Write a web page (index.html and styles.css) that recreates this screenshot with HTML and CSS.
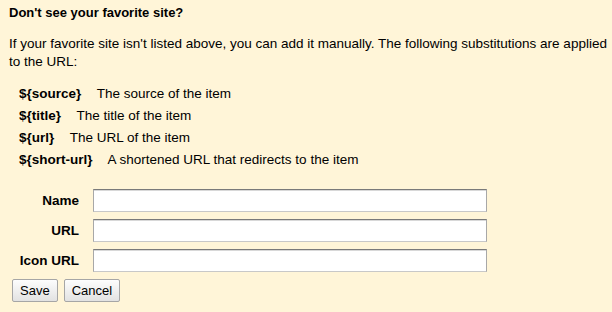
FILE: index.html
```html
<!DOCTYPE html>
<html lang="en">
<head>
    <meta charset="UTF-8">
    <title>Custom site</title>
    <link rel="stylesheet" href="styles.css">
</head>
<body>
    <div class="custom-site">
        <h3>Don't see your favorite site?</h3>
        <p>If your favorite site isn't listed above, you can add it manually. The following substitutions are applied to the URL:</p>

        <ul class="subs">
            <li><b>${source}</b> The source of the item</li>
            <li><b>${title}</b> The title of the item</li>
            <li><b>${url}</b> The URL of the item</li>
            <li><b>${short-url}</b> A shortened URL that redirects to the item</li>
        </ul>

        <div class="fields">
            <label for="name">Name</label>
            <input type="text" id="name">
            <label for="url">URL</label>
            <input type="text" id="url">
            <label for="icon">Icon URL</label>
            <input type="text" id="icon">
        </div>

        <div class="buttons">
            <button>Save</button>
            <button>Cancel</button>
        </div>
    </div>
</body>
</html>
```

FILE: styles.css
```css
body {
    margin: 0;
    background: #fff5d8;
    color: #000;
    font-family: "Liberation Sans", Arial, sans-serif;
    font-size: 13.5px;
}
.custom-site {
    padding: 5px 2px 5px 9px;
}
.custom-site h3 {
    font-size: 13px;
    margin: 0 0 14px;
    line-height: 16px;
}
.custom-site p {
    margin: 0 0 12px;
    line-height: 18px;
}
.subs {
    list-style: none;
    margin: 0 0 18px;
    padding: 0 0 0 10px;
}
.subs li {
    line-height: 22px;
}
.subs b {
    margin-right: 12px;
}
.fields {
    display: grid;
    grid-template-columns: 70px 394px;
    column-gap: 14px;
    row-gap: 7px;
    align-items: center;
}
.fields label {
    font-weight: bold;
    text-align: right;
}
.fields input {
    box-sizing: border-box;
    height: 23px;
    margin: 0;
    background: #fff;
    border: 1px solid #c8c8c8;
    border-top-color: #7a7a7a;
    border-left-color: #a8a8a8;
    border-right-color: #a8a8a8;
    box-shadow: inset 0 1px 0 #d8d8d8;
}
.buttons {
    display: flex;
    gap: 6px;
    margin: 7px 0 0 3px;
}
.buttons button {
    font-family: inherit;
    font-size: 13px;
    height: 23px;
    padding: 0 7px;
    border: 1px solid #a6a6a6;
    border-radius: 2px;
    background: linear-gradient(#fdfdfd, #e2e2e2);
    color: #000;
}
```
